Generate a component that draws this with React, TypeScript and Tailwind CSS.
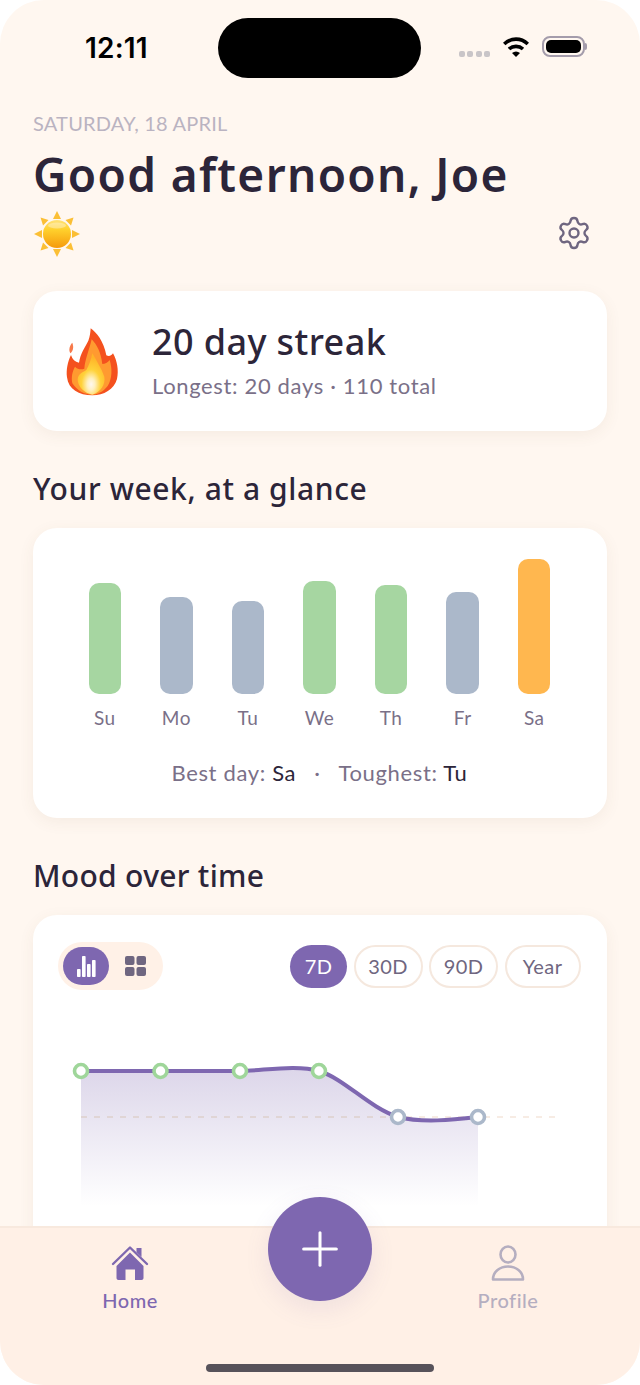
import { Settings, Plus } from 'lucide-react';

const font = { heading: "font-['Noto_Sans',sans-serif]", body: "font-['Lato',sans-serif]" };

const week = [
  { d: 'Su', bar: 'h-[111px] bg-[#a6d6a1]' },
  { d: 'Mo', bar: 'h-[97px] bg-[#abb8ca]' },
  { d: 'Tu', bar: 'h-[93px] bg-[#abb8ca]' },
  { d: 'We', bar: 'h-[113px] bg-[#a6d6a1]' },
  { d: 'Th', bar: 'h-[109px] bg-[#a6d6a1]' },
  { d: 'Fr', bar: 'h-[102px] bg-[#abb8ca]' },
  { d: 'Sa', bar: 'h-[135px] bg-[#ffb74f]' },
];

const ranges = [
  { label: '30D', w: 'w-[69px]' },
  { label: '90D', w: 'w-[69px]' },
  { label: 'Year', w: 'w-[76px]' },
];

function StatusBar() {
  return (
    <div className="relative h-[109px] shrink-0">
      <div className="absolute left-[218px] top-[18px] h-[60px] w-[203px] rounded-[30px] bg-black" />
      <div className="flex items-start justify-between pl-[85px] pr-[53px] pt-[32px]">
        <span className="font-['Inter',sans-serif] text-[28px] font-semibold leading-[32px] tracking-[0.2px] text-black">12:11</span>
        <div className="flex items-center gap-[13px] pt-[4px]">
          <div className="flex gap-[2.5px] pt-[14px]">
            <i className="h-[6px] w-[6px] rounded-[2px] bg-[#c9c5c8]" />
            <i className="h-[6px] w-[6px] rounded-[2px] bg-[#c9c5c8]" />
            <i className="h-[6px] w-[6px] rounded-[2px] bg-[#c9c5c8]" />
            <i className="h-[6px] w-[6px] rounded-[2px] bg-[#c9c5c8]" />
          </div>
          <svg width="26" height="20" viewBox="0 0 26 20">
            <path d="M1.2 7 C8 0.5 18 0.5 24.8 7" fill="none" stroke="#000" strokeWidth="3.6" />
            <path d="M6 12 C10 8.5 16 8.5 20 12" fill="none" stroke="#000" strokeWidth="3.6" />
            <path d="M9 16 C11.5 14 14.5 14 17 16 L13 20 Z" fill="#000" />
          </svg>
          <div className="flex items-center">
            <div className="h-[21px] w-[43px] rounded-[8px] border-[2px] border-[#a49cab] p-[2px]">
              <div className="h-full w-full rounded-[5px] bg-black" />
            </div>
            <div className="h-[7px] w-[2px] rounded-r-full bg-[#a49cab]" />
          </div>
        </div>
      </div>
    </div>
  );
}

function Sun() {
  return (
    <svg width="48" height="48" viewBox="0 0 48 48">
      <defs>
        <linearGradient id="sunBody" x1="0" y1="0" x2="0" y2="1">
          <stop offset="0" stopColor="#ffe27a" />
          <stop offset="0.35" stopColor="#ffd02c" />
          <stop offset="1" stopColor="#f59a0c" />
        </linearGradient>
      </defs>
      <g fill="#fbbf35">
        <path d="M24 1 L28 9 L20 9 Z" />
        <path d="M24 47 L28 39 L20 39 Z" />
        <path d="M1 24 L9 20 L9 28 Z" />
        <path d="M47 24 L39 20 L39 28 Z" />
        <path d="M7.5 7.5 L15.5 10 L10 15.5 Z" />
        <path d="M40.5 7.5 L32.5 10 L38 15.5 Z" />
        <path d="M7.5 40.5 L15.5 38 L10 32.5 Z" />
        <path d="M40.5 40.5 L32.5 38 L38 32.5 Z" />
      </g>
      <circle cx="24" cy="24" r="14" fill="url(#sunBody)" />
      <ellipse cx="24" cy="15.5" rx="9" ry="3" fill="#fff" opacity="0.35" />
    </svg>
  );
}

function Flame() {
  return (
    <svg width="70" height="80" viewBox="0 0 210 240" className="-mt-[3px]">
      <defs>
        <radialGradient id="flameCore" cx="0.5" cy="0.75" r="0.65">
          <stop offset="0" stopColor="#fff8f0" />
          <stop offset="0.22" stopColor="#fff0c0" />
          <stop offset="0.55" stopColor="#ffd23a" />
          <stop offset="1" stopColor="#ffb428" />
        </radialGradient>
      </defs>
      <path d="M40 68 C44 80 44 90 34 100 C28 90 32 76 40 68 Z" fill="#f7794a" />
      <path d="M95 25 C112 38 134 62 142 106 C150 110 156 108 162 100 C174 122 180 150 174 177 C165 208 135 226 100 226 C60 226 28 208 24 172 C21 150 26 125 36 105 C40 118 48 126 60 128 C64 100 78 82 88 62 C93 50 94 38 95 25 Z" fill="#f4511e" />
      <path d="M98 58 C114 74 126 98 130 132 C138 132 146 128 152 120 C160 146 160 176 146 198 C132 216 114 224 100 224 C76 224 54 212 40 190 C36 172 40 154 48 140 C56 148 66 150 76 146 C78 118 90 92 98 58 Z" fill="#ff9a30" />
      <path d="M100 100 C112 122 128 146 136 170 C140 192 126 216 100 224 C76 220 56 200 56 178 C58 160 70 158 82 150 C90 136 96 120 100 100 Z" fill="url(#flameCore)" />
    </svg>
  );
}

function MoodChart() {
  const pts = [
    { x: 81, y: 1071, c: '#9fd69a' },
    { x: 160.5, y: 1071, c: '#9fd69a' },
    { x: 240, y: 1071, c: '#9fd69a' },
    { x: 319, y: 1071, c: '#9fd69a' },
    { x: 398, y: 1117, c: '#abb8ca' },
    { x: 478, y: 1117, c: '#abb8ca' },
  ];
  const line = 'M81 1071 L240 1071 C262 1071 296 1064 319 1071 C345 1079 368 1107 398 1117 C422 1123 452 1120 478 1117';
  return (
    <svg width="574" height="220" viewBox="33 1000 574 220" className="block">
      <defs>
        <linearGradient id="moodFill" x1="0" y1="0" x2="0" y2="1">
          <stop offset="0" stopColor="#7e67b0" stopOpacity="0.27" />
          <stop offset="1" stopColor="#7e67b0" stopOpacity="0" />
        </linearGradient>
      </defs>
      <path d={`${line} L478 1206 L81 1206 Z`} fill="url(#moodFill)" />
      <line x1="81" y1="1117" x2="556" y2="1117" stroke="#f5e6dc" strokeWidth="1.5" strokeDasharray="6 7" />
      <line x1="81" y1="1117" x2="398" y2="1117" stroke="#c9c2c8" strokeOpacity="0.6" strokeWidth="1.5" strokeDasharray="6 7" />
      <path d={line} fill="none" stroke="#7e67b0" strokeWidth="4" strokeLinecap="round" />
      {pts.map((p) => (
        <circle key={p.x} cx={p.x} cy={p.y} r="6.5" fill="#fff" stroke={p.c} strokeWidth="3.6" />
      ))}
    </svg>
  );
}

function HomeIcon() {
  return (
    <svg width="38" height="36" viewBox="0 0 38 36">
      <path d="M2 19 L19 2.5 L36 19" fill="none" stroke="#7e67b0" strokeWidth="2.4" strokeLinecap="round" strokeLinejoin="round" />
      <path d="M25.5 3 H30.5 V12 L25.5 7.2 Z" fill="#7e67b0" />
      <path d="M19 7.5 L32.5 21 V33 C32.5 34.2 31.7 35 30.5 35 H24 V24.5 H14.5 V35 H7.5 C6.3 35 5.5 34.2 5.5 33 V21 Z" fill="#7e67b0" />
    </svg>
  );
}

function ProfileIcon() {
  return (
    <svg width="34" height="36" viewBox="0 0 34 36" fill="none" stroke="#b5aec0" strokeWidth="2.6">
      <ellipse cx="17" cy="9.5" rx="7.5" ry="8" />
      <path d="M2 34.5 C2 26.5 9 21.5 17 21.5 C25 21.5 32 26.5 32 34.5 Z" strokeLinejoin="round" />
    </svg>
  );
}

export default function App() {
  return (
    <div className={`relative h-[1385px] w-[640px] overflow-hidden rounded-[44px] bg-[#fff7f0] ${font.body}`}>
      <StatusBar />
      <main className="px-[33px]">
        <p className="text-[20px] leading-[28px] tracking-[0.2px] text-[#bab3c1]">SATURDAY, 18 APRIL</p>
        <h1 className={`mt-[7px] text-[46px] font-semibold leading-[60px] tracking-[1.35px] text-[#2c2539] ${font.heading}`}>Good afternoon, Joe</h1>
        <div className="mt-[6px] flex h-[48px] items-center justify-between">
          <Sun />
          <Settings size={36} strokeWidth={1.6} className="-mt-[2px] mr-[15px] text-[#6f6680]" />
        </div>

        <section className="mt-[33px] flex h-[140px] items-center rounded-[24px] bg-white pl-[26px] shadow-[0_4px_16px_rgba(120,90,60,0.07)]">
          <Flame />
          <div className="ml-[23px]">
            <p className={`-mt-[2px] text-[36px] font-medium leading-[44px] tracking-[0.4px] text-[#2c2539] ${font.heading}`}>20 day streak</p>
            <p className="mt-[7px] text-[22px] leading-[30px] tracking-[0.65px] text-[#7a7088]">Longest: 20 days · 110 total</p>
          </div>
        </section>

        <h2 className={`mt-[38px] text-[30px] font-medium leading-[40px] tracking-[0.6px] text-[#2c2539] ${font.heading}`}>Your week, at a glance</h2>
        <section className="mt-[19px] h-[290px] rounded-[24px] bg-white pl-[36px] pr-[37px] pt-[31px] shadow-[0_4px_16px_rgba(120,90,60,0.07)]">
          <div className="grid grid-cols-7">
            {week.map((w) => (
              <div key={w.d} className="flex flex-col items-center">
                <div className="flex h-[135px] items-end">
                  <div className={`w-[32.5px] rounded-[10px] ${w.bar}`} />
                </div>
                <span className="mt-[11px] text-[19px] leading-[26px] tracking-[0.5px] text-[#7a7088]">{w.d}</span>
              </div>
            ))}
          </div>
          <p className="mt-[27px] text-center text-[22px] leading-[30px] tracking-[0.65px] text-[#7a7088]">
            Best day: <span className="text-[#2c2539]">Sa</span>
            <span className="mx-[18px]">·</span>
            Toughest: <span className="text-[#2c2539]">Tu</span>
          </p>
        </section>

        <h2 className={`mt-[38px] text-[30px] font-medium leading-[40px] tracking-[0.3px] text-[#2c2539] ${font.heading}`}>Mood over time</h2>
        <section className="mt-[19px] h-[400px] rounded-[24px] bg-white shadow-[0_4px_16px_rgba(120,90,60,0.07)]">
          <div className="flex items-center justify-between pl-[25px] pr-[26.5px] pt-[27px]">
            <div className="flex h-[48px] w-[105px] items-center rounded-full bg-[#fff1e7] pl-[5px]">
              <div className="flex h-[38px] w-[46px] items-center justify-center rounded-full bg-[#7e67b0]">
                <svg width="19" height="21" viewBox="0 0 19 21" fill="#fff">
                  <rect x="0" y="13" width="3.6" height="8" rx="0.8" />
                  <rect x="5" y="0" width="3.6" height="21" rx="0.8" />
                  <rect x="10" y="8" width="3.6" height="13" rx="0.8" />
                  <rect x="15" y="4" width="3.6" height="17" rx="0.8" />
                </svg>
              </div>
              <svg width="21" height="20" viewBox="0 0 21 20" fill="#6f6680" className="ml-[16px]">
                <rect x="0" y="0" width="9.5" height="9" rx="2" />
                <rect x="11.5" y="0" width="9.5" height="9" rx="2" />
                <rect x="0" y="11" width="9.5" height="9" rx="2" />
                <rect x="11.5" y="11" width="9.5" height="9" rx="2" />
              </svg>
            </div>
            <div className="flex items-center gap-[6.5px]">
              <span className="flex h-[43px] w-[57px] items-center justify-center rounded-full bg-[#7e67b0] pb-[1px] text-[20px] tracking-[0.4px] text-white">7D</span>
              {ranges.map((r) => (
                <span key={r.label} className={`flex h-[43px] items-center justify-center rounded-full border-2 border-[#f5e8de] pb-[1px] text-[20px] tracking-[0.4px] text-[#6f6680] ${r.w}`}>
                  {r.label}
                </span>
              ))}
            </div>
          </div>
          <div className="mt-[10px]">
            <MoodChart />
          </div>
        </section>
      </main>

      <nav className="absolute inset-x-0 bottom-0 h-[159px] border-t-2 border-[#f8e9de] bg-[#fff0e6]">
        <div className="flex items-start justify-between pl-[90px] pr-[92px] pt-[17px]">
          <div className="flex w-[80px] flex-col items-center">
            <HomeIcon />
            <span className="mt-[6px] text-[20px] font-medium leading-[26px] tracking-[0.5px] text-[#7e67b0]">Home</span>
          </div>
          <div className="flex w-[80px] flex-col items-center">
            <ProfileIcon />
            <span className="mt-[6px] text-[20px] font-medium leading-[26px] tracking-[0.5px] text-[#b5aec0]">Profile</span>
          </div>
        </div>
        <div className="absolute bottom-[13px] left-[206px] h-[8px] w-[228px] rounded-full bg-[#57525a]" />
      </nav>

      <button className="absolute left-[268px] top-[1197px] flex h-[104px] w-[104px] items-center justify-center rounded-full bg-[#7e67b0] text-white shadow-[0_8px_24px_rgba(126,103,176,0.12)]">
        <Plus size={56} strokeWidth={1.3} />
      </button>
    </div>
  );
}
